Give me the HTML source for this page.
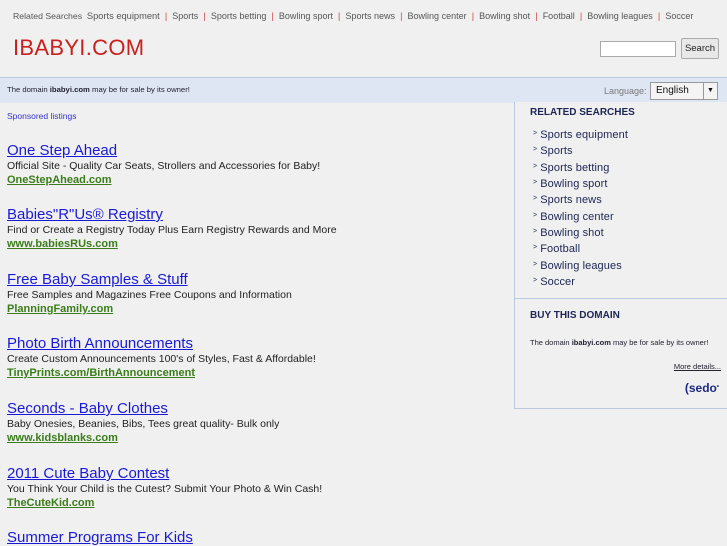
<!DOCTYPE html>
<html><head><meta charset="utf-8"><style>
body{margin:0;width:727px;height:545px;overflow:hidden;background:#f0f0f0;font-family:"Liberation Sans",sans-serif;position:relative}
.abs{position:absolute}
.top{left:13px;top:11px;font-size:8.7px;color:#555;white-space:nowrap}
.top a{color:#555;text-decoration:none;font-size:9px}
.top .s{color:#c44;margin:0 5.1px;font-size:9px}
.logo{left:13px;top:35px;font-size:22px;color:#c8201e;letter-spacing:0.3px}
.sbox{left:600px;top:41px;width:74px;height:14px;border:1px solid #aaa;background:#fff}
.sbtn{left:681px;top:38px;width:36px;height:19px;border:1px solid #aaa;background:#e8e8e8;font-size:9.5px;text-align:center;line-height:19px;border-radius:2px;color:#222}
.band{left:0;top:77px;width:727px;height:25px;background:#dfe6f3;border-top:1px solid #b8c8e0}
.band .t{position:absolute;left:7px;top:7px;font-size:7.7px;color:#223}
.lang{left:604px;top:86px;font-size:9px;color:#777}
.sel{left:650px;top:82px;width:66px;height:16px;border:1px solid #999;background:#f4f4f4;font-size:10px;line-height:16px;color:#111}
.sel span{padding-left:5px}
.sel i{position:absolute;right:0;top:0;width:13px;height:16px;border-left:1px solid #999;font-style:normal;font-size:7px;text-align:center}
.spon{left:7px;top:111px;font-size:8.5px;color:#33c}
.ad{position:absolute;left:7px}
.ad .h{font-size:15px;color:#1a1ad6;text-decoration:underline;line-height:16px}
.ad .d{font-size:10.5px;color:#222;line-height:14px}
.ad .u{font-size:11px;font-weight:bold;color:#3a7d1a;text-decoration:underline;line-height:14px}
.panel{left:514px;top:102px;width:212px;height:306px;border:1px solid #b8c8e0;border-top:none;background:#f0f0f0}
.ph{position:absolute;left:15px;font-size:10px;font-weight:bold;color:#1c2553}
.rel{position:absolute;left:18px;top:25px;font-size:11px;color:#1c2553;letter-spacing:0.1px}
.rel div{height:16.35px;line-height:16px;white-space:nowrap}
.rel div:before{content:"\02C3";font-size:7px;margin-right:3px;position:relative;top:-3px}
.sep{position:absolute;left:0;top:196px;width:212px;border-top:1px solid #b8c8e0}
</style></head><body>
<div class="abs top">Related Searches &nbsp;<a style="font-size:9.3px">Sports equipment</a><span class="s">|</span><a>Sports</a><span class="s">|</span><a>Sports betting</a><span class="s">|</span><a>Bowling sport</a><span class="s">|</span><a>Sports news</a><span class="s">|</span><a>Bowling center</a><span class="s">|</span><a>Bowling shot</a><span class="s">|</span><a>Football</a><span class="s">|</span><a>Bowling leagues</a><span class="s">|</span><a>Soccer</a></div>
<div class="abs logo">IBABYI.COM</div>
<div class="abs sbox"></div>
<div class="abs sbtn">Search</div>
<div class="abs band"><div class="t">The domain <b>ibabyi.com</b> may be for sale by its owner!</div></div>
<div class="abs lang">Language:</div>
<div class="abs sel"><span>English</span><i>▼</i></div>
<div class="abs spon">Sponsored listings</div>
<div class="ad" style="top:143px"><div class="h">One Step Ahead</div><div class="d">Official Site - Quality Car Seats, Strollers and Accessories for Baby!</div><div class="u">OneStepAhead.com</div></div>
<div class="ad" style="top:207px"><div class="h">Babies"R"Us® Registry</div><div class="d">Find or Create a Registry Today Plus Earn Registry Rewards and More</div><div class="u">www.babiesRUs.com</div></div>
<div class="ad" style="top:272px"><div class="h">Free Baby Samples &amp; Stuff</div><div class="d">Free Samples and Magazines Free Coupons and Information</div><div class="u">PlanningFamily.com</div></div>
<div class="ad" style="top:336px"><div class="h">Photo Birth Announcements</div><div class="d">Create Custom Announcements 100's of Styles, Fast &amp; Affordable!</div><div class="u">TinyPrints.com/BirthAnnouncement</div></div>
<div class="ad" style="top:401px"><div class="h">Seconds - Baby Clothes</div><div class="d">Baby Onesies, Beanies, Bibs, Tees great quality- Bulk only</div><div class="u">www.kidsblanks.com</div></div>
<div class="ad" style="top:466px"><div class="h">2011 Cute Baby Contest</div><div class="d">You Think Your Child is the Cutest? Submit Your Photo &amp; Win Cash!</div><div class="u">TheCuteKid.com</div></div>
<div class="ad" style="top:530px"><div class="h">Summer Programs For Kids</div></div>
<div class="abs panel">
<div class="ph" style="top:5px">RELATED SEARCHES</div>
<div class="rel"><div>Sports equipment</div><div>Sports</div><div>Sports betting</div><div>Bowling sport</div><div>Sports news</div><div>Bowling center</div><div>Bowling shot</div><div>Football</div><div>Bowling leagues</div><div>Soccer</div></div>
<div class="sep"></div>
<div class="ph" style="top:208px">BUY THIS DOMAIN</div>
<div style="position:absolute;left:15px;top:236px;font-size:7.5px;color:#223">The domain <b>ibabyi.com</b> may be for sale by its owner!</div>
<div style="position:absolute;right:6px;top:260px;font-size:7.5px;color:#223;text-decoration:underline">More details...</div>
<div style="position:absolute;right:8px;top:279px;font-size:12px;font-weight:bold;color:#1c2a80">(sedo<span style="font-size:6px;vertical-align:4px">•</span></div>
</div>
</body></html>
